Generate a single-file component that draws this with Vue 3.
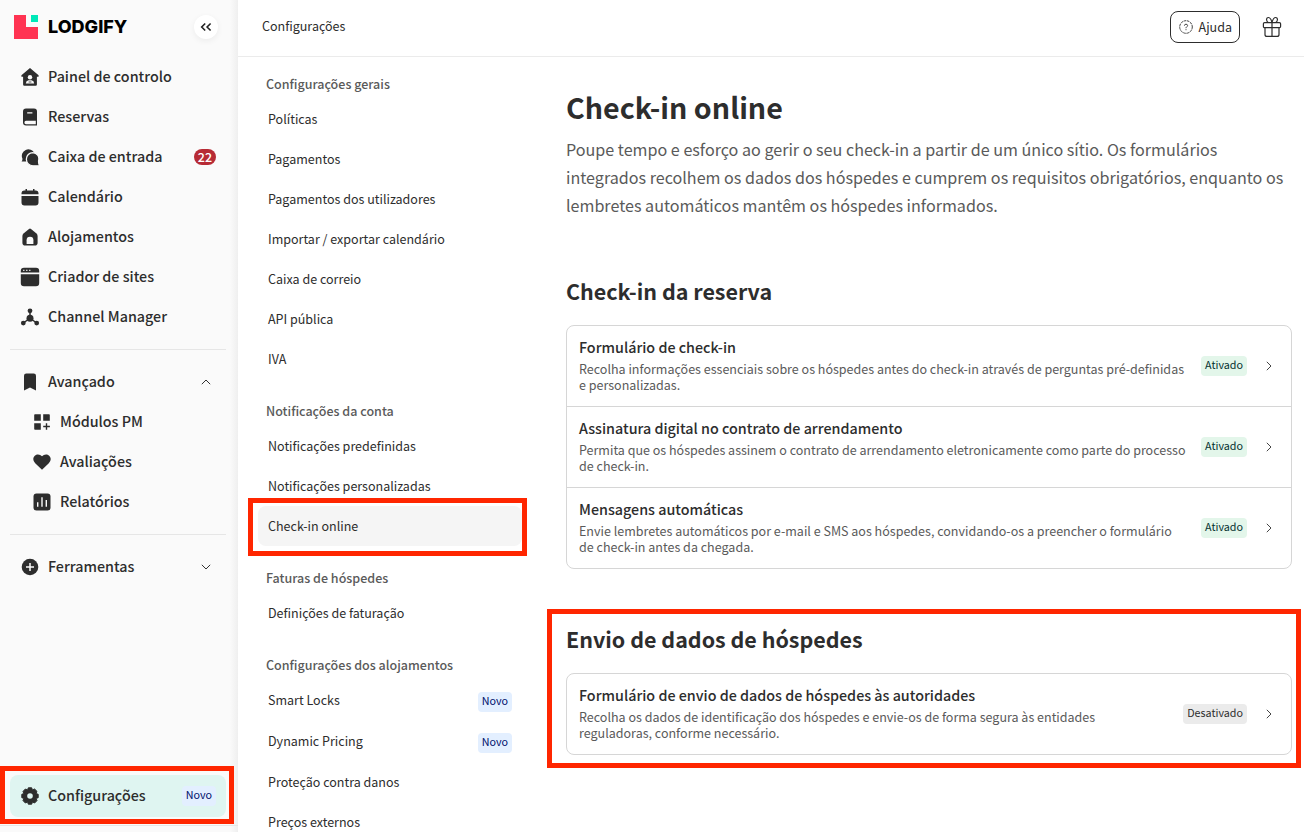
<script setup>
const mainNav = [
  { label: 'Painel de controlo', icon: 'home' },
  { label: 'Reservas', icon: 'book' },
  { label: 'Caixa de entrada', icon: 'chat', count: 22 },
  { label: 'Calendário', icon: 'calendar' },
  { label: 'Alojamentos', icon: 'lodging' },
  { label: 'Criador de sites', icon: 'site' },
  { label: 'Channel Manager', icon: 'channel' },
]
const advancedNav = [
  { label: 'Módulos PM', icon: 'modules' },
  { label: 'Avaliações', icon: 'heart' },
  { label: 'Relatórios', icon: 'chart' },
]
const groups = [
  {
    title: 'Configurações gerais',
    items: [
      { label: 'Políticas' },
      { label: 'Pagamentos' },
      { label: 'Pagamentos dos utilizadores' },
      { label: 'Importar / exportar calendário' },
      { label: 'Caixa de correio' },
      { label: 'API pública' },
      { label: 'IVA' },
    ],
  },
  {
    title: 'Notificações da conta',
    items: [
      { label: 'Notificações predefinidas' },
      { label: 'Notificações personalizadas' },
      { label: 'Check-in online', active: true },
    ],
  },
  { title: 'Faturas de hóspedes', items: [{ label: 'Definições de faturação' }] },
  {
    title: 'Configurações dos alojamentos',
    items: [
      { label: 'Smart Locks', badge: 'Novo' },
      { label: 'Dynamic Pricing', badge: 'Novo' },
      { label: 'Proteção contra danos' },
      { label: 'Preços externos' },
    ],
  },
]
const sections = [
  {
    title: 'Check-in da reserva',
    rows: [
      {
        title: 'Formulário de check-in',
        text: 'Recolha informações essenciais sobre os hóspedes antes do check-in através de perguntas pré-definidas e personalizadas.',
        on: true,
      },
      {
        title: 'Assinatura digital no contrato de arrendamento',
        text: 'Permita que os hóspedes assinem o contrato de arrendamento eletronicamente como parte do processo de check-in.',
        on: true,
      },
      {
        title: 'Mensagens automáticas',
        text: 'Envie lembretes automáticos por e-mail e SMS aos hóspedes, convidando-os a preencher o formulário de check-in antes da chegada.',
        on: true,
      },
    ],
  },
  {
    title: 'Envio de dados de hóspedes',
    marked: true,
    rows: [
      {
        title: 'Formulário de envio de dados de hóspedes às autoridades',
        text: 'Recolha os dados de identificação dos hóspedes e envie-os de forma segura às entidades reguladoras, conforme necessário.',
        on: false,
      },
    ],
  },
]
const icons = {
  home: '<path d="M10 1 18.6 8.3V9.8H16.9V17.6Q16.9 18.8 15.7 18.8H4.3Q3.1 18.8 3.1 17.6V9.8H1.4V8.3Z"/><circle cx="10" cy="10.3" r="2.2" fill="#fafafa"/><path d="M5.8 16.6Q6 13.7 8.5 13.2H11.5Q14 13.7 14.2 16.6Z" fill="#fafafa"/><path d="M8.6 14.6H11.4V15.4H8.6Z"/>',
  book: '<path d="M6 1.5H14Q17 1.5 17 4.5V18.5H6Q3 18.5 3 15.5V4.5Q3 1.5 6 1.5Z"/><path d="M7.2 5.2H12.4V6.4H7.2Z M6 13.8H15.8V17.2H6Q4.4 17.2 4.4 15.5T6 13.8Z" fill="#fafafa"/>',
  chat: '<path d="M1.6 14.6Q2.6 13.2 2.4 11.6A6.4 6.4 0 1 1 14.4 6.2L8 14.4H5Z"/><path d="M12.9 5.6A6.2 6.2 0 0 1 18.6 13.6Q18.4 16.4 19.6 18.8H13A6.6 6.6 0 1 1 12.9 5.6Z" stroke="#fafafa" stroke-width="1.3"/>',
  calendar: '<path d="M5.5 2H7V3.4H13V2H14.5V3.4H16Q18.5 3.6 18.5 6V7.3H1.5V6Q1.5 3.6 4 3.4H5.5Z M1.5 9H18.5V15.5Q18.5 18.5 15.5 18.5H4.5Q1.5 18.5 1.5 15.5Z"/>',
  lodging: '<path d="M9 2Q10 1.2 11 2L16.2 6.2Q17.6 7.5 17.6 9V15.8Q17.6 18.6 14.8 18.6H5.2Q2.4 18.6 2.4 15.8V9Q2.4 7.5 3.8 6.2Z"/><path d="M6.6 16.9V13.2A3.4 3.4 0 0 1 13.4 13.2V16.9Z" fill="#fafafa"/>',
  site: '<path d="M4 .8H16Q19.2 .8 19.2 4V5.6H.8V4Q.8 .8 4 .8Z M.8 7.3H19.2V16Q19.2 19.2 16 19.2H4Q.8 19.2 .8 16Z"/><path d="M3.2 2.8H4.4V4H3.2Z M6.2 2.8H7.4V4H6.2Z M9.2 2.8H10.4V4H9.2Z" fill="#fafafa"/>',
  channel: '<circle cx="10" cy="3.8" r="2.4"/><circle cx="10" cy="11.2" r="3.5"/><circle cx="3.3" cy="16.1" r="2.4"/><circle cx="16.7" cy="16.1" r="2.4"/><path d="M10 4V11L3.5 16M10 11 16.5 16" stroke="#2d2d2d" stroke-width="1.5" fill="none"/>',
  bookmark: '<path d="M6.3 1.4H13.7Q16 1.4 16 3.7V18.4L10 15.6 4 18.4V3.7Q4 1.4 6.3 1.4Z"/>',
  modules: '<path d="M3 2.2H8.8V8.8H2.2V3Q2.2 2.2 3 2.2Z M11.2 2.2H17Q17.8 2.2 17.8 3V8.8H11.2Z M2.2 11.2H8.8V17.8H3Q2.2 17.8 2.2 17Z M13.8 11.2H15.2V13.8H17.9V15.2H15.2V17.8H13.8V15.2H11.2V13.8H13.8Z"/>',
  heart: '<path d="M10 17.7 3.2 11.2C-1 6.5 2.7 2.5 6 2.5Q8.4 2.5 10 4.2 11.6 2.5 14 2.5C17.3 2.5 21 6.5 16.8 11.2Z"/>',
  chart: '<rect x="1.5" y="1.5" width="17" height="17" rx="3"/><path d="M5.7 10.2V14.8M10 5.2V14.8M14.3 8V14.8" stroke="#fafafa" stroke-width="1.4"/>',
  plus: '<circle cx="10" cy="10" r="8.3"/><path d="M10 6V14M6 10H14" stroke="#fafafa" stroke-width="1.5"/>',
  gear: '<path d="M8.3 1.8H11.7L12.4 3.9 14.6 3 17 5.4 16.1 7.6 18.2 8.3V11.7L16.1 12.4 17 14.6 14.6 17 12.4 16.1 11.7 18.2H8.3L7.6 16.1 5.4 17 3 14.6 3.9 12.4 1.8 11.7V8.3L3.9 7.6 3 5.4 5.4 3 7.6 3.9Z" stroke="#2d2d2d" stroke-width="1" stroke-linejoin="round"/><circle cx="10" cy="10" r="2.8" fill="#dff5f1"/>',
}
</script>

<template>
  <div class="app">
    <aside class="sidebar">
      <div class="brand">
        <a class="logo" href="#">
          <svg width="24" height="24" viewBox="0 0 24 24" aria-hidden="true">
            <path d="M0 0H12V12H24V24H0Z" fill="#ff3352" />
            <path d="M17 0H24V7H17Z" fill="#00e8b8" />
          </svg>
          <span>LODGIFY</span>
        </a>
        <button class="collapse" aria-label="Recolher menu">
          <svg width="12" height="10" viewBox="0 0 12 10" aria-hidden="true">
            <path d="M5.2 1.5 1.7 5 5.2 8.5M10.6 1.5 7.1 5 10.6 8.5" fill="none" stroke="#222" stroke-width="1.6" />
          </svg>
        </button>
      </div>
      <nav class="nav">
        <a v-for="n in mainNav" :key="n.label" class="item" href="#">
          <svg class="icon" viewBox="0 0 20 20" aria-hidden="true" v-html="icons[n.icon]" />
          <span class="label">{{ n.label }}</span>
          <span v-if="n.count" class="count">{{ n.count }}</span>
        </a>
        <hr />
        <button class="item" aria-expanded="true">
          <svg class="icon" viewBox="0 0 20 20" aria-hidden="true" v-html="icons.bookmark" />
          <span class="label">Avançado</span>
          <svg class="caret" viewBox="0 0 10 6" aria-hidden="true"><path d="M.8 5.2 5 1 9.2 5.2" /></svg>
        </button>
        <a v-for="n in advancedNav" :key="n.label" class="item child" href="#">
          <svg class="icon" viewBox="0 0 20 20" aria-hidden="true" v-html="icons[n.icon]" />
          <span class="label">{{ n.label }}</span>
        </a>
        <hr />
        <button class="item" aria-expanded="false">
          <svg class="icon" viewBox="0 0 20 20" aria-hidden="true" v-html="icons.plus" />
          <span class="label">Ferramentas</span>
          <svg class="caret" viewBox="0 0 10 6" aria-hidden="true"><path d="M.8 .8 5 5 9.2 .8" /></svg>
        </button>
      </nav>
      <div class="foot">
        <a class="item current marked" href="#">
          <svg class="icon" viewBox="0 0 20 20" aria-hidden="true" v-html="icons.gear" />
          <span class="label">Configurações</span>
          <span class="badge new">Novo</span>
        </a>
      </div>
    </aside>

    <div class="page">
      <header class="topbar">
        <span class="crumb">Configurações</span>
        <div class="tools">
          <button class="help">
            <svg width="14" height="14" viewBox="0 0 14 14" fill="none" stroke="#444" aria-hidden="true">
              <circle cx="7" cy="7" r="6.3" stroke-dasharray="2.6 .7" />
              <path d="M5.4 5.7Q5.5 4.2 7 4.2T8.6 5.6Q8.6 6.4 7.7 6.8 7 7.2 7 8.2M7 9.2V10.2" />
            </svg>
            Ajuda
          </button>
          <button class="gift" aria-label="Novidades">
            <svg width="20" height="22" viewBox="0 0 20 22" fill="none" stroke="#2d2d2d" stroke-width="1.2" aria-hidden="true">
              <rect x="1.4" y="6.6" width="17.2" height="5" rx="1.2" />
              <path d="M3 11.6V18.4Q3 20.4 5 20.4H15Q17 20.4 17 18.4V11.6M10 6.6V20.4M10 6.4Q8.6 1.3 6.1 1.5 4.3 1.8 4.6 4 4.9 5.6 6.2 6.4M10 6.4Q11.4 1.3 13.9 1.5 15.7 1.8 15.4 4 15.1 5.6 13.8 6.4" />
            </svg>
          </button>
        </div>
      </header>
      <div class="body">
        <nav class="subnav" aria-label="Configurações">
          <section v-for="g in groups" :key="g.title">
            <h2>{{ g.title }}</h2>
            <a
              v-for="i in g.items"
              :key="i.label"
              class="sub"
              :class="{ active: i.active, marked: i.active, tagged: i.badge }"
              href="#"
            >
              <span>{{ i.label }}</span>
              <span v-if="i.badge" class="badge new">{{ i.badge }}</span>
            </a>
          </section>
        </nav>
        <main class="content">
          <h1>Check-in online</h1>
          <p class="intro">
            Poupe tempo e esforço ao gerir o seu check-in a partir de um único sítio. Os formulários
            integrados recolhem os dados dos hóspedes e cumprem os requisitos obrigatórios, enquanto os
            lembretes automáticos mantêm os hóspedes informados.
          </p>
          <section v-for="s in sections" :key="s.title" class="block" :class="{ marked: s.marked }">
            <h2>{{ s.title }}</h2>
            <div class="card">
              <a v-for="r in s.rows" :key="r.title" class="row" href="#">
                <div class="info">
                  <h3>{{ r.title }}</h3>
                  <p>{{ r.text }}</p>
                </div>
                <span class="badge" :class="r.on ? 'on' : 'off'">{{ r.on ? 'Ativado' : 'Desativado' }}</span>
                <svg class="go" width="6" height="10" viewBox="0 0 6 10" aria-hidden="true">
                  <path d="M.8 .8 5 5 .8 9.2" fill="none" stroke="#444" />
                </svg>
              </a>
            </div>
          </section>
        </main>
      </div>
    </div>
  </div>
</template>

<style>
body {
  background: #fff;
}
</style>

<style scoped>
.app,
.app * {
  box-sizing: border-box;
}
.app {
  display: flex;
  height: 100vh;
  overflow: hidden;
  color: #2d2d2d;
  font-family: "Noto Sans CJK JP", "Noto Sans", sans-serif;
  font-size: 14px;
  line-height: 20px;
  font-size-adjust: 0.486;
}
h1,
h2,
h3,
p {
  margin: 0;
}
a {
  color: inherit;
  text-decoration: none;
}
button {
  padding: 0;
  border: 0;
  background: none;
  color: inherit;
  font: inherit;
  font-size-adjust: inherit;
  text-align: left;
}
svg {
  flex: none;
  display: block;
}
.sidebar {
  flex: none;
  display: flex;
  flex-direction: column;
  width: 238px;
  background: linear-gradient(to right, transparent 230px, #efefef) #fafafa;
}
.brand {
  display: flex;
  align-items: center;
  justify-content: space-between;
  height: 57px;
  padding: 0 20px 4px 14px;
}
.logo {
  display: flex;
  align-items: center;
  gap: 10px;
  color: #000;
  font-family: Inter, sans-serif;
  font-size: 18px;
  font-weight: 800;
  font-size-adjust: none;
}
.collapse {
  display: grid;
  place-items: center;
  width: 24px;
  height: 24px;
  border-radius: 50%;
  background: #fff;
  box-shadow: 0 2px 6px #0000000f;
}
.nav {
  flex: 1;
  display: flex;
  flex-direction: column;
  padding: 0 12px 0 10px;
}
.item {
  position: relative;
  flex: none;
  display: flex;
  align-items: center;
  gap: 8px;
  height: 40px;
  padding: 0 10px;
  font-size: 16px;
  font-weight: 500;
}
.child {
  padding-left: 22px;
}
.icon {
  width: 20px;
  height: 20px;
  fill: #2d2d2d;
}
.label {
  flex: 1;
  padding-bottom: 2px;
}
.count {
  width: 22px;
  border-radius: 8px;
  background: #b72b35;
  color: #fff;
  font-size: 14px;
  line-height: 16px;
  text-align: center;
}
.caret {
  width: 10px;
  height: 6px;
  margin-right: 5px;
  fill: none;
  stroke: #333;
}
hr {
  width: 216px;
  height: 1px;
  margin: 12px 0;
  border: 0;
  background: #e6e6e6;
}
.foot {
  padding: 0 12px 8px 10px;
  border-bottom: 1px solid #e6e6e6;
  margin-bottom: 6px;
}
.current {
  height: 42px;
  border-radius: 8px;
  background: #dff5f1;
}
.badge {
  flex: none;
  padding: 0 4px 2px;
  border-radius: 4px;
  font-size: 12px;
  font-weight: 400;
  line-height: 18px;
}
.new {
  background: #e3efff;
  color: #00106b;
}
.on {
  background: #e3f6ea;
  color: #04302f;
}
.off {
  background: #ebebeb;
  color: #2d2d2d;
}
.page {
  flex: 1;
  min-width: 0;
  display: flex;
  flex-direction: column;
}
.topbar {
  flex: none;
  display: flex;
  align-items: center;
  justify-content: space-between;
  height: 57px;
  padding: 0 22px 3px 24px;
  border-bottom: 1px solid #ebebeb;
}
.crumb {
  padding-bottom: 2px;
}
.tools {
  display: flex;
  align-items: center;
  gap: 22px;
}
.help {
  display: flex;
  align-items: center;
  gap: 6px;
  height: 32px;
  padding: 0 7px 0 8px;
  border: 1px solid #2d2d2d;
  border-radius: 8px;
}
.body {
  flex: 1;
  min-height: 0;
  display: flex;
}
.subnav {
  flex: none;
  display: flex;
  flex-direction: column;
  gap: 22px;
  width: 284px;
  padding: 17px 0 0 20px;
}
.subnav h2 {
  margin-bottom: 5px;
  padding-left: 8px;
  color: #5a5a5a;
  font-size: 14px;
  font-weight: 500;
}
.sub {
  position: relative;
  display: flex;
  justify-content: space-between;
  padding: 10px;
}
.active {
  border-radius: 8px;
  background: #f5f5f5;
}
.tagged {
  height: 41px;
  padding-bottom: 9px;
}
.tagged .badge {
  align-self: flex-end;
}
.content {
  flex: 1;
  min-width: 0;
  padding: 30px 12px 0 44px;
}
h1 {
  font-size: 32px;
  font-weight: 700;
  line-height: 40px;
}
.intro {
  margin: 8px 0 56px;
  color: #5a5a5a;
  font-size: 18px;
  line-height: 28px;
}
.block {
  position: relative;
  margin-bottom: 54px;
}
.block h2 {
  margin-bottom: 18px;
  font-size: 24px;
  font-weight: 700;
  line-height: 32px;
}
.card {
  border: 1px solid #d6d6d6;
  border-radius: 8px;
}
.row {
  display: flex;
  align-items: center;
  padding: 0 19px 0 12px;
}
.row + .row {
  border-top: 1px solid #d6d6d6;
}
.info {
  flex: 1;
  margin-right: 14px;
  padding: 9px 0 13px;
}
.info h3 {
  margin-bottom: 2px;
  font-size: 16px;
  font-weight: 500;
  line-height: 24px;
}
.info p {
  color: #5a5a5a;
  line-height: 16px;
}
.go {
  margin-left: 19px;
}
.marked::after {
  content: "";
  position: absolute;
  border: 5px solid #ff2600;
  pointer-events: none;
}
.current::after {
  inset: -9px -8px -7px -10px;
}
.active::after {
  inset: -8px -5px -10px -10px;
}
.block::after {
  inset: -14px -9px -13px -19px;
}
</style>
